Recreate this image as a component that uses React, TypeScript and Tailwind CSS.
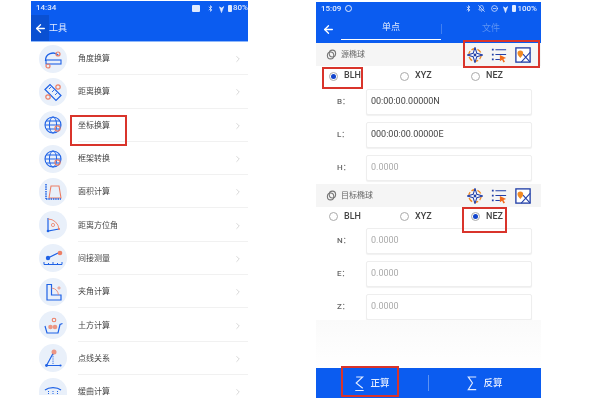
import { ArrowLeft, BellOff, Bluetooth, ChevronRight, CircleMinus, Navigation } from 'lucide-react'

const BLUE = '#1f62e6'
const RED = '#ec7f66'

function Globe() {
  return (
    <>
      <circle cx="13" cy="13" r="8" fill="none" stroke={BLUE} strokeWidth="1.100" />
      <ellipse cx="13" cy="13" rx="3.600" ry="8" fill="none" stroke={BLUE} strokeWidth="1" />
      <path d="M5 13h16M6.200 9h13.600M6.200 17h13.600" stroke={BLUE} strokeWidth="1" />
      <circle cx="17.500" cy="16.500" r="2.600" fill="none" stroke={RED} strokeWidth="1.100" />
    </>
  )
}

const tools: { label: string; icon: React.ReactNode }[] = [
  {
    label: '角度换算',
    icon: (
      <>
        <path d="M5.500 15a7.500 7.500 0 0 1 13-5.500" fill="none" stroke={BLUE} strokeWidth="1.300" />
        <rect x="6" y="14" width="15" height="4" fill="none" stroke={BLUE} strokeWidth="1.100" />
        <circle cx="8" cy="20" r="2" fill="none" stroke={RED} strokeWidth="1.200" />
        <circle cx="18" cy="8" r="2" fill="none" stroke={RED} strokeWidth="1.200" />
      </>
    ),
  },
  {
    label: '距离换算',
    icon: (
      <>
        <path d="M5 10.500l5-5 11 11-5 5z" fill="none" stroke={BLUE} strokeWidth="1.200" />
        <path d="M9 10l2-2M12 13l2-2M15 16l2-2" stroke={BLUE} strokeWidth="0.900" />
        <circle cx="18" cy="8" r="2.200" fill="none" stroke={RED} strokeWidth="1.200" />
        <circle cx="8" cy="18" r="2.200" fill="none" stroke={RED} strokeWidth="1.200" />
      </>
    ),
  },
  { label: '坐标换算', icon: <Globe /> },
  { label: '框架转换', icon: <Globe /> },
  {
    label: '面积计算',
    icon: (
      <>
        <path d="M9 19l2-12h8l2 12z" fill="none" stroke={RED} strokeWidth="1.100" />
        <path d="M6 5v15M6 20h15" stroke={BLUE} strokeWidth="1.500" strokeDasharray="1.500 0.800" />
      </>
    ),
  },
  {
    label: '距离方位角',
    icon: (
      <>
        <path d="M8 6v13l11-2" fill="none" stroke={BLUE} strokeWidth="1.200" />
        <path d="M8 7a11 11 0 0 1 11 10" fill="none" stroke={RED} strokeWidth="0.900" />
        <circle cx="13" cy="13" r="1.600" fill="none" stroke={RED} strokeWidth="0.800" />
        <circle cx="8" cy="19" r="1.300" fill={BLUE} />
        <circle cx="19" cy="17" r="1.100" fill={RED} />
      </>
    ),
  },
  {
    label: '间接测量',
    icon: (
      <>
        <path d="M8 13l10-5" stroke={BLUE} strokeWidth="1.300" />
        <circle cx="8" cy="13" r="2.200" fill={BLUE} />
        <circle cx="20" cy="8" r="2.300" fill={RED} />
        <path d="M4 19.500h18M4 19.500v-2.500M8.500 19.500v-1.500M13 19.500v-2.500M17.500 19.500v-1.500M22 19.500v-2.500" fill="none" stroke={BLUE} strokeWidth="1" />
      </>
    ),
  },
  {
    label: '夹角计算',
    icon: (
      <>
        <path d="M7 5.500v15.500h14v-5h-9.500V5.500z" fill="none" stroke={BLUE} strokeWidth="1.200" />
        <path d="M11.500 9a8 8 0 0 1 7 7" fill="none" stroke={RED} strokeWidth="0.800" />
        <circle cx="19" cy="9" r="1.100" fill="none" stroke={RED} strokeWidth="0.800" />
      </>
    ),
  },
  {
    label: '土方计算',
    icon: (
      <>
        <path d="M5 14l2 7h11l2-8.500 2.500-1" fill="none" stroke={BLUE} strokeWidth="1.200" />
        <circle cx="10.500" cy="15" r="2.300" fill={RED} opacity="0.800" />
        <circle cx="15" cy="15" r="2.300" fill={RED} opacity="0.800" />
        <circle cx="14" cy="8" r="1.800" fill="none" stroke={RED} strokeWidth="1.100" />
      </>
    ),
  },
  {
    label: '点线关系',
    icon: (
      <>
        <path d="M6.500 20.500l6.500-12M6.500 20.500h14" fill="none" stroke={BLUE} strokeWidth="1.200" />
        <path d="M13 9v11" stroke={BLUE} strokeWidth="0.900" strokeDasharray="1.200 1" />
        <circle cx="14" cy="7" r="2.500" fill={RED} opacity="0.800" />
        <circle cx="6.500" cy="20.500" r="1.400" fill={BLUE} />
        <circle cx="20.500" cy="20.500" r="1.100" fill={BLUE} />
      </>
    ),
  },
  {
    label: '缓曲计算',
    icon: (
      <>
        <path d="M5 11a10 6 0 0 1 16 0" fill="none" stroke={BLUE} strokeWidth="1.200" />
        <path d="M8.500 12v5M13 12v6M17.500 12v5" stroke={BLUE} strokeWidth="1" strokeDasharray="1 1" />
      </>
    ),
  },
]

function LeftPhone() {
  return (
    <div className="relative flex h-[399px] w-[217px] shrink-0 flex-col overflow-hidden bg-white">
      <div className="flex h-[14px] shrink-0 items-center justify-between bg-[#0b5cf0] pl-[5px] text-[8px] font-medium text-[#dfe9fd]">
        <span>14:34</span>
        <span className="flex items-center whitespace-nowrap">
          <span className="mr-[7px] h-[7px] w-[8px] rounded-[1px] bg-[#dfe9fd]" />
          <Bluetooth size={7} strokeWidth={2.500} className="mr-[4px]" />
          <Navigation size={7} fill="currentColor" className="mr-[3px] rotate-[135deg]" />
          <span className="mr-[1px] h-[7px] w-[4px] rounded-[1px] bg-[#dfe9fd]" />
          80%
        </span>
      </div>
      <div className="flex h-[27px] shrink-0 items-center border-b border-[#8fb8fa] bg-[#0b5cf0] text-[9px] text-[#e3ecff]">
        <span className="flex h-full w-[18px] items-center justify-center bg-[#0a50d2]">
          <ArrowLeft size={13} strokeWidth={2.500} className="text-white" />
        </span>
        <span className="pt-[2px]">工具</span>
      </div>
      <ul className="flex flex-col">
        {tools.map((tool, i) => (
          <li key={tool.label} className="flex h-[33.3px] shrink-0 items-center pl-[8px]">
            {/* last row runs off the bottom of the shot, only the top of its badge shows */}
            <span
              className={`flex w-[28px] shrink-0 justify-center overflow-hidden rounded-t-full bg-[#e9f0fa] pt-[1px] ${
                i === tools.length - 1 ? 'mt-[3px] h-[17px] self-start' : 'h-[28px] rounded-b-full'
              }`}
            >
              <svg viewBox="0 0 26 26" className="h-[26px] w-[26px] shrink-0">
                {tool.icon}
              </svg>
            </span>
            <span className="ml-[11px] flex h-full flex-1 items-center justify-between border-b border-[#f1f1f1] pt-[2px] pr-[5px] text-[8px] text-[#444]">
              {tool.label}
              <ChevronRight size={10} strokeWidth={1.300} className="text-[#b5b5b5]" />
            </span>
          </li>
        ))}
      </ul>
      <div className="absolute top-[114px] left-[39px] h-[31px] w-[57px] border-2 border-[#d9342b]" />
    </div>
  )
}

function Radio({ label, checked }: { label: string; checked?: boolean }) {
  return (
    <span className="flex items-center gap-[6px] text-[9px] font-medium text-[#444]">
      <span className="flex h-[9px] w-[9px] items-center justify-center rounded-full border border-[#aaa] bg-white">
        {checked && <span className="h-[5px] w-[5px] rounded-full bg-[#1144cc]" />}
      </span>
      {label}
    </span>
  )
}

function ToolIcons() {
  return (
    <span className="flex items-center gap-[8px]">
      <svg viewBox="0 0 18 18" className="h-[16px] w-[16px]">
        <circle cx="9" cy="9" r="7" fill="none" stroke="#f08a24" strokeWidth="1.500" strokeDasharray="5 2" />
        <path d="M9 0.500L11 7 17.500 9 11 11 9 17.500 7 11 0.500 9 7 7z" fill="#fff" stroke="#2340a8" strokeWidth="1.200" />
        <circle cx="9" cy="9" r="1.600" fill="#2340a8" />
      </svg>
      <svg viewBox="0 0 18 18" className="h-[16px] w-[16px]">
        <path d="M1 3h2M1 8.500h2M1 14h2" stroke="#2340a8" strokeWidth="2" />
        <path d="M5 3h12M5 8.500h12M5 14h5" stroke="#2340a8" strokeWidth="1.200" />
        <path d="M10 9l7 3.500-3 1 1.700 3-1.700 .8-1.500-3-2.500 1.700z" fill="#f26a1b" />
      </svg>
      <svg viewBox="0 0 18 18" className="h-[16px] w-[16px]">
        <rect x="1" y="1" width="16" height="16" fill="#fff" stroke="#2340a8" strokeWidth="1.500" />
        <path d="M7 17L17 6M9 8l8 9" stroke="#2340a8" strokeWidth="1.200" />
        <path d="M6 12.500c-1.500-2.200-3.200-3.300-3.200-5.500a3.200 3.200 0 0 1 6.400 0c0 2.200-1.700 3.300-3.200 5.500z" fill="#f08a24" />
      </svg>
    </span>
  )
}

function SectionBar({ title }: { title: string }) {
  return (
    <div className="flex h-[23px] shrink-0 items-center justify-between bg-[#f5f5f5] px-[10px] text-[8px] text-[#666]">
      <span className="flex items-center gap-[4px]">
        <svg viewBox="0 0 12 12" className="h-[11px] w-[11px]">
          <ellipse cx="5" cy="7" rx="3.500" ry="3.800" fill="none" stroke="#777" strokeWidth="1.200" />
          <ellipse cx="7" cy="5" rx="3.500" ry="3.800" fill="none" stroke="#777" strokeWidth="1.200" />
        </svg>
        <span className="pt-[1px]">{title}</span>
      </span>
      <ToolIcons />
    </div>
  )
}

function Field({ label, value, filled }: { label: string; value: string; filled?: boolean }) {
  return (
    <div className="flex h-[26px] items-center">
      <span className="w-[50px] pl-[21px] text-[8px] font-medium text-[#666]">{label}：</span>
      <span
        className={`flex h-[26px] w-[166px] items-center rounded-[2px] border border-[#eeeeee] bg-white pl-[4px] text-[9px] shadow-[0_1px_1px_rgba(0,0,0,0.06)] ${
          filled ? 'text-[#444]' : 'text-[#aaa]'
        }`}
      >
        {value}
      </span>
    </div>
  )
}

function Coordinates({
  title,
  active,
  rowClass,
  fields,
}: {
  title: string
  active: string
  rowClass: string
  fields: [string, string, boolean?][]
}) {
  return (
    <section className="flex flex-col">
      <SectionBar title={title} />
      <div className={`grid shrink-0 grid-cols-[71px_71px_1fr] items-center pl-[13px] ${rowClass}`}>
        {['BLH', 'XYZ', 'NEZ'].map((name) => (
          <Radio key={name} label={name} checked={name === active} />
        ))}
      </div>
      <div className="flex flex-col gap-[7px]">
        {fields.map(([label, value, filled]) => (
          <Field key={label} label={label} value={value} filled={filled} />
        ))}
      </div>
    </section>
  )
}

function RightPhone() {
  return (
    <div className="relative mt-[1px] flex h-[396px] w-[225px] shrink-0 flex-col overflow-hidden bg-white">
      <div className="flex h-[13px] shrink-0 items-center justify-between bg-[#0b5cf0] pr-[4px] pl-[5px] text-[8px] font-medium text-[#e3ecff]">
        <span className="flex items-center gap-[4px]">
          15:09
          <span className="h-[7px] w-[7px] rounded-full border border-[#e3ecff]" />
        </span>
        <span className="flex items-center whitespace-nowrap">
          <Bluetooth size={7} strokeWidth={2.500} className="mr-[6px]" />
          <BellOff size={7} strokeWidth={2.500} className="mr-[6px]" />
          <CircleMinus size={7} strokeWidth={2.500} className="mr-[4px]" />
          <Navigation size={7} fill="currentColor" className="mr-[3px] rotate-[135deg]" />
          <span className="mr-[1px] h-[7px] w-[4px] rounded-[1px] bg-[#e3ecff]" />
          100%
        </span>
      </div>
      <div className="flex h-[28px] shrink-0 bg-[#0b5cf0] text-[9px]">
        <span className="flex w-[25px] items-center justify-center">
          <ArrowLeft size={13} strokeWidth={2.500} className="text-white" />
        </span>
        <span className="flex h-[25px] w-[100px] items-center justify-center border-b border-white pt-[2px] text-[#dfe9fd]">单点</span>
        <span className="relative flex h-[25px] w-[100px] items-center justify-center pt-[2px] text-[#5d93f3]">
          <span className="absolute top-[9px] left-0 h-[10px] w-px bg-[#3f80f2]" />
          文件
        </span>
      </div>
      <Coordinates
        title="源椭球"
        active="BLH"
        rowClass="h-[23px] pb-[3px]"
        fields={[
          ['B', '00:00:00.00000N', true],
          ['L', '000:00:00.00000E', true],
          ['H', '0.0000'],
        ]}
      />
      <div className="h-[3px] shrink-0" />
      <Coordinates
        title="目标椭球"
        active="NEZ"
        rowClass="h-[21px] pb-[2px]"
        fields={[
          ['N', '0.0000'],
          ['E', '0.0000'],
          ['Z', '0.0000'],
        ]}
      />
      <div className="flex-1 bg-gradient-to-b from-[#fafafa] to-white" />
      <div className="flex h-[30px] shrink-0 items-center bg-[#0b5cf0] text-[9.500px] font-medium text-[#e3ecff]">
        <span className="flex flex-1 items-center justify-center gap-[6px]">
          <svg viewBox="0 0 10 16" className="h-[15px] w-[10px]" fill="none" stroke="currentColor" strokeWidth="1.200">
            <path d="M2 1H9L2 7.500 9 13M1 15.500H10" />
          </svg>
          正算
        </span>
        <span className="h-[16px] w-px bg-[#5d93f3]" />
        <span className="flex flex-1 items-center justify-center gap-[6px]">
          <svg viewBox="0 0 10 16" className="h-[15px] w-[10px]" fill="none" stroke="currentColor" strokeWidth="1.200">
            <path d="M9.500 1H1l4.500 6.500L1 14.500h8.500" />
          </svg>
          反算
        </span>
      </div>
      <div className="absolute top-[38px] left-[147px] h-[28px] w-[77px] border-2 border-[#d9342b]" />
      <div className="absolute top-[65px] left-[6px] h-[22px] w-[41px] border-2 border-[#d9342b]" />
      <div className="absolute top-[205px] left-[146px] h-[26px] w-[45px] border-2 border-[#d9342b]" />
      <div className="absolute top-[364px] left-[25px] h-[31px] w-[58px] border-2 border-[#d9342b]" />
    </div>
  )
}

export default function App() {
  return (
    <div className="flex h-[400px] w-[600px] gap-[68px] overflow-hidden bg-white pt-[1px] pl-[31px] font-['Roboto','Noto_Sans_CJK_SC',sans-serif] blur-[0.3px]">
      <LeftPhone />
      <RightPhone />
    </div>
  )
}
